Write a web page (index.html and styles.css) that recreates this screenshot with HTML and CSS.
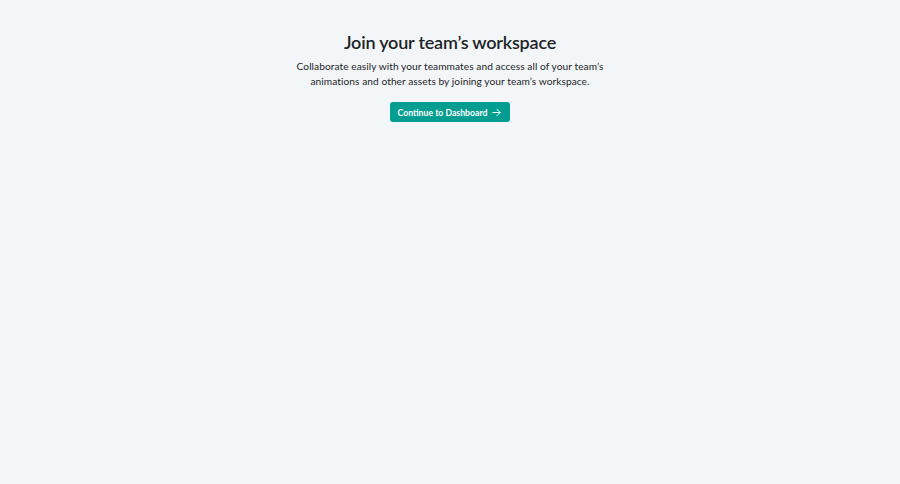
FILE: index.html
```html
<!DOCTYPE html>
<html lang="en">
<head>
<meta charset="utf-8">
<title>Join your team's workspace</title>
<link rel="stylesheet" href="styles.css">
</head>
<body>
<main class="page">
  <section class="join">
    <h1 class="join-title">Join your team’s workspace</h1>
    <p class="join-text">Collaborate easily with your teammates and access all of your team’s<br>animations and other assets by joining your team’s workspace.</p>
    <a class="join-button" href="#">
      <span>Continue to Dashboard</span>
      <svg class="join-arrow" width="9" height="9" viewBox="0 0 10 10" fill="none" stroke="currentColor" stroke-width="1.1" stroke-linecap="round" stroke-linejoin="round"><path d="M1 5h8M5.5 1.5L9 5 5.5 8.5"/></svg>
    </a>
  </section>
</main>
</body>
</html>
```
FILE: styles.css
```css
html, body {
  margin: 0;
  padding: 0;
  background: #f3f6f8;
  height: 100%;
}
body {
  font-family: "Lato", "Liberation Sans", sans-serif;
  color: #1d2428;
}
.page {
  display: flex;
  justify-content: center;
  padding-top: 30px;
}
.join {
  display: flex;
  flex-direction: column;
  align-items: center;
  text-align: center;
}
.join-title {
  margin: 0;
  font-size: 18px;
  line-height: 24px;
  font-weight: 600;
  letter-spacing: -0.2px;
}
.join-text {
  margin: 5px 0 0;
  font-size: 10.2px;
  line-height: 15px;
  font-weight: 400;
  letter-spacing: 0.05px;
}
.join-button {
  margin-top: 13px;
  display: flex;
  align-items: center;
  gap: 5px;
  height: 20px;
  padding: 0 9px 0 8px;
  background: #019d91;
  color: #ffffff;
  border-radius: 3px;
  font-size: 8.7px;
  font-weight: 700;
  text-decoration: none;
}
.join-arrow {
  display: block;
}
```
